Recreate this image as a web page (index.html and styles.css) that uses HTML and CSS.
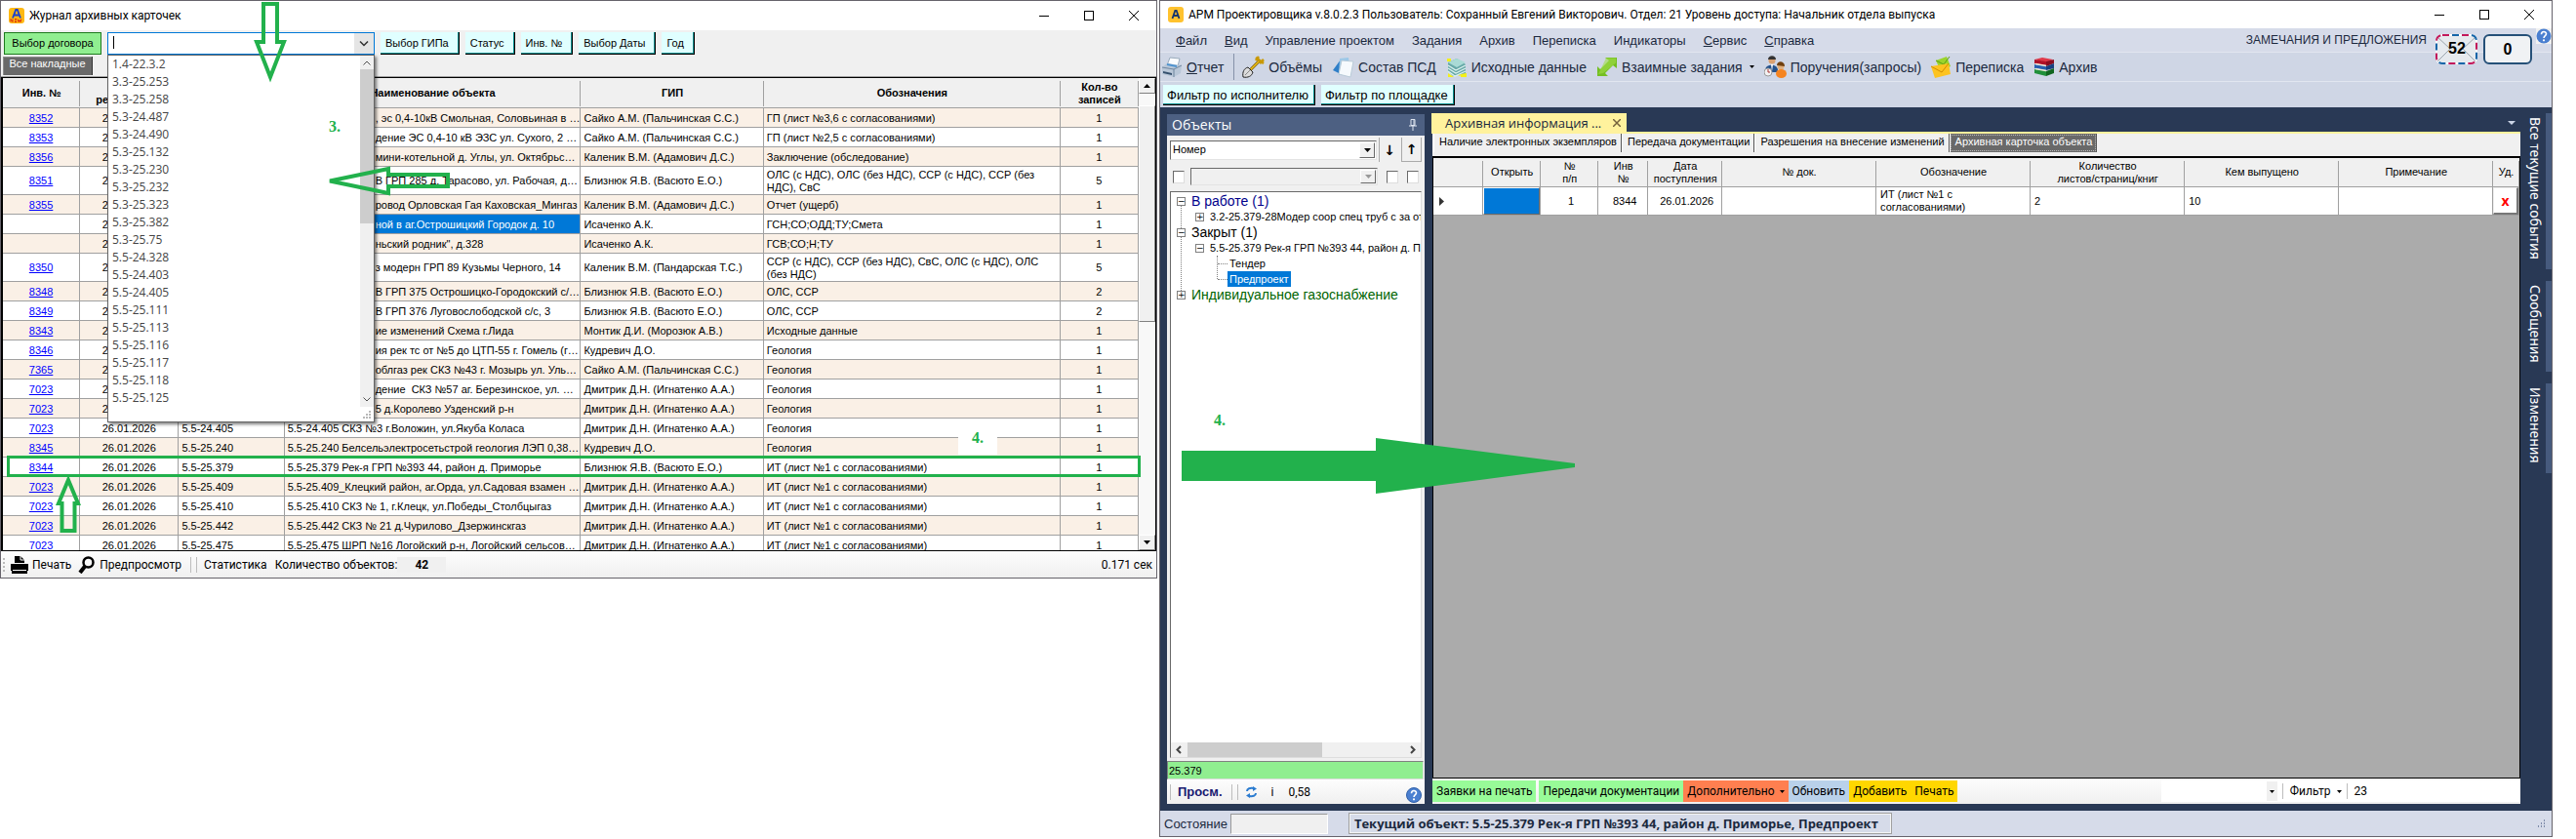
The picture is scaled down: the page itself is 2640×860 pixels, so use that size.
FILE: index.html
```html
<!DOCTYPE html>
<html lang="ru">
<head>
<meta charset="utf-8">
<title>Журнал архивных карточек</title>
<link rel="stylesheet" href="styles.css">
</head>
<body>
<main class="desk">

<section class="win journal">
  <header class="titlebar">
    <svg class="logo" viewBox="0 0 16 16" width="16" height="16"><rect width="16" height="16" rx="3" fill="#fdb813"/><path d="M4 10.500 7.200 2h1.600L12 10.500M5.300 7.500h5.400" fill="none" stroke="#1a3fd0" stroke-width="1.800"/><path d="M2 14.500v-3l2 3v-3M6 11.500h2M6 13h2M6 14.500h2M9 11.500l1 3 1-2 1 2 1-3" fill="none" stroke="#e03010" stroke-width="1"/></svg>
    <h1>Журнал архивных карточек</h1>
    <div class="winbtns">
      <button aria-label="Свернуть"><svg width="10" height="10"><path d="M0 5.500h10" stroke="#000"/></svg></button>
      <button aria-label="Развернуть"><svg width="10" height="10"><rect x=".5" y=".5" width="9" height="9" fill="none" stroke="#000"/></svg></button>
      <button aria-label="Закрыть"><svg width="10" height="10"><path d="M0 0l10 10M10 0L0 10" stroke="#000"/></svg></button>
    </div>
  </header>

  <div class="filters">
    <button class="pick">Выбор договора</button>
    <div class="combo">
      <input type="text" aria-label="Договор" class="combo-text"><button class="combo-arrow" aria-label="Открыть список"><svg width="10" height="6"><path d="M1 .5l4 4 4-4" fill="none" stroke="#333" stroke-width="1.500"/></svg></button>
      <i class="caret"></i>
      <div class="popup">
        <div class="popup-body">
          <ul>
            <li>1.4-22.3.2</li><li>3.3-25.253</li><li>3.3-25.258</li><li>5.3-24.487</li><li>5.3-24.490</li><li>5.3-25.132</li><li>5.3-25.230</li><li>5.3-25.232</li><li>5.3-25.323</li><li>5.3-25.382</li><li>5.3-25.75</li><li>5.5-24.328</li><li>5.5-24.403</li><li>5.5-24.405</li><li>5.5-25.111</li><li>5.5-25.113</li><li>5.5-25.116</li><li>5.5-25.117</li><li>5.5-25.118</li><li>5.5-25.125</li>
          </ul>
          <div class="thinbar"><svg width="8" height="5"><path d="M.5 4.500L4 1l3.500 3.500" fill="none" stroke="#505050"/></svg><i class="thinthumb"></i><svg width="8" height="5"><path d="M.5 .5L4 4 7.500 .5" fill="none" stroke="#505050"/></svg></div>
        </div>
        <svg class="popup-grip" width="8" height="8"><path d="M6 1h2M3 4h2M6 4h2M0 7h2M3 7h2M6 7h2" stroke="#b8b8b8" stroke-width="2"/></svg>
      </div>
    </div>
    <button class="aqua">Выбор ГИПа</button>
    <button class="aqua">Статус</button>
    <button class="aqua">Инв. №</button>
    <button class="aqua">Выбор Даты</button>
    <button class="aqua">Год</button>
  </div>
  <div class="tabline"><button class="darktab">Все накладные</button></div>

  <div class="gridwrap">
    <div class="gridview">
    <table class="log">
      <colgroup><col class="l1"><col class="l2"><col class="l3"><col class="l4"><col class="l5"><col class="l6"><col class="l7"></colgroup>
      <thead><tr><th>Инв. №</th><th>Дата регистрации</th><th>Договор</th><th>Наименование объекта</th><th>ГИП</th><th>Обозначения</th><th>Кол-во записей</th></tr></thead>
      <tbody>
        <tr><td><a href="#">8352</a></td><td>26.01.2026</td><td></td><td class="under">, эс 0,4-10кВ Смольная, Соловьиная в Минске</td><td>Сайко А.М. (Пальчинская С.С.)</td><td>ГП (лист №3,6 с согласованиями)</td><td>1</td></tr>
        <tr><td><a href="#">8353</a></td><td>26.01.2026</td><td></td><td class="under">дение ЭС 0,4-10 кВ ЭЗС ул. Сухого, 2 в Минске</td><td>Сайко А.М. (Пальчинская С.С.)</td><td>ГП (лист №2,5 с согласованиями)</td><td>1</td></tr>
        <tr><td><a href="#">8356</a></td><td>26.01.2026</td><td></td><td class="under">мини-котельной д. Углы, ул. Октябрьская, д. 1</td><td>Каленик В.М. (Адамович Д.С.)</td><td>Заключение (обследование)</td><td>1</td></tr>
        <tr class="tall"><td><a href="#">8351</a></td><td>26.01.2026</td><td></td><td class="under">В ГРП 285 д. Тарасово, ул. Рабочая, д. 12 взамен</td><td>Близнюк Я.В. (Васюто Е.О.)</td><td>ОЛС (с НДС), ОЛС (без НДС), ССР (с НДС), ССР (без НДС), СвС</td><td>5</td></tr>
        <tr><td><a href="#">8355</a></td><td>26.01.2026</td><td></td><td class="under">ровод Орловская Гая Каховская_Мингаз</td><td>Каленик В.М. (Адамович Д.С.)</td><td>Отчет (ущерб)</td><td>1</td></tr>
        <tr><td></td><td>26.01.2026</td><td></td><td class="under sel">ной в аг.Острошицкий Городок д. 10</td><td>Исаченко А.К.</td><td>ГСН;СО;ОДД;ТУ;Смета</td><td>1</td></tr>
        <tr><td></td><td>26.01.2026</td><td></td><td class="under">ньский родник", д.328</td><td>Исаченко А.К.</td><td>ГСВ;СО;Н;ТУ</td><td>1</td></tr>
        <tr class="tall"><td><a href="#">8350</a></td><td>26.01.2026</td><td></td><td class="under">з модерн ГРП 89 Кузьмы Черного, 14</td><td>Каленик В.М. (Пандарская Т.С.)</td><td>ССР (с НДС), ССР (без НДС), СвС, ОЛС (с НДС), ОЛС (без НДС)</td><td>5</td></tr>
        <tr><td><a href="#">8348</a></td><td>26.01.2026</td><td></td><td class="under">В ГРП 375 Острошицко-Городокский с/с, 14</td><td>Близнюк Я.В. (Васюто Е.О.)</td><td>ОЛС, ССР</td><td>2</td></tr>
        <tr><td><a href="#">8349</a></td><td>26.01.2026</td><td></td><td class="under">В ГРП 376 Луговослободской с/с, 3</td><td>Близнюк Я.В. (Васюто Е.О.)</td><td>ОЛС, ССР</td><td>2</td></tr>
        <tr><td><a href="#">8343</a></td><td>26.01.2026</td><td></td><td class="under">ие изменений Схема г.Лида</td><td>Монтик Д.И. (Морозюк А.В.)</td><td>Исходные данные</td><td>1</td></tr>
        <tr><td><a href="#">8346</a></td><td>26.01.2026</td><td></td><td class="under">ия рек тс от №5 до ЦТП-55 г. Гомель (геология)</td><td>Кудревич Д.О.</td><td>Геология</td><td>1</td></tr>
        <tr><td><a href="#">7365</a></td><td>26.01.2026</td><td></td><td class="under">облгаз рек СКЗ №43 г. Мозырь ул. Ульяновская</td><td>Сайко А.М. (Пальчинская С.С.)</td><td>Геология</td><td>1</td></tr>
        <tr><td><a href="#">7023</a></td><td>26.01.2026</td><td></td><td class="under">дение &nbsp;СКЗ №57 аг. Березинское, ул. Советская</td><td>Дмитрик Д.Н. (Игнатенко А.А.)</td><td>Геология</td><td>1</td></tr>
        <tr><td><a href="#">7023</a></td><td>26.01.2026</td><td></td><td class="under">5 д.Королево Узденский р-н</td><td>Дмитрик Д.Н. (Игнатенко А.А.)</td><td>Геология</td><td>1</td></tr>
        <tr><td><a href="#">7023</a></td><td>26.01.2026</td><td>5.5-24.405</td><td>5.5-24.405 СКЗ №3 г.Воложин, ул.Якуба Коласа</td><td>Дмитрик Д.Н. (Игнатенко А.А.)</td><td>Геология</td><td>1</td></tr>
        <tr><td><a href="#">8345</a></td><td>26.01.2026</td><td>5.5-25.240</td><td>5.5-25.240 Белсельэлектросетьстрой геология ЛЭП 0,38 кВ</td><td>Кудревич Д.О.</td><td>Геология</td><td>1</td></tr>
        <tr><td><a href="#">8344</a></td><td>26.01.2026</td><td>5.5-25.379</td><td>5.5-25.379 Рек-я ГРП №393 44, район д. Приморье</td><td>Близнюк Я.В. (Васюто Е.О.)</td><td>ИТ (лист №1 с согласованиями)</td><td>1</td></tr>
        <tr><td><a href="#">7023</a></td><td>26.01.2026</td><td>5.5-25.409</td><td>5.5-25.409_Клецкий район, аг.Орда, ул.Садовая взамен СКЗ</td><td>Дмитрик Д.Н. (Игнатенко А.А.)</td><td>ИТ (лист №1 с согласованиями)</td><td>1</td></tr>
        <tr><td><a href="#">7023</a></td><td>26.01.2026</td><td>5.5-25.410</td><td>5.5-25.410 СКЗ № 1, г.Клецк, ул.Победы_Столбцыгаз</td><td>Дмитрик Д.Н. (Игнатенко А.А.)</td><td>ИТ (лист №1 с согласованиями)</td><td>1</td></tr>
        <tr><td><a href="#">7023</a></td><td>26.01.2026</td><td>5.5-25.442</td><td>5.5-25.442 СКЗ № 21 д.Чурилово_Дзержинскгаз</td><td>Дмитрик Д.Н. (Игнатенко А.А.)</td><td>ИТ (лист №1 с согласованиями)</td><td>1</td></tr>
        <tr><td><a href="#">7023</a></td><td>26.01.2026</td><td>5.5-25.475</td><td>5.5-25.475 ШРП №16 Логойский р-н, Логойский сельсовет, д. 3</td><td>Дмитрик Д.Н. (Игнатенко А.А.)</td><td>ИТ (лист №1 с согласованиями)</td><td>1</td></tr>
      </tbody>
    </table>
    </div>
    <div class="fatbar">
      <button aria-label="Вверх"><svg width="7" height="4"><path d="M0 4l3.500-4L7 4z"/></svg></button>
      <i class="fatthumb"></i>
      <button class="down" aria-label="Вниз"><svg width="7" height="4"><path d="M0 0l3.500 4L7 0z"/></svg></button>
    </div>
  </div>

  <footer class="journal-foot">
    <i class="dots"></i>
    <button class="flat print"><svg width="20" height="18" viewBox="0 0 20 18"><path d="M5 7V0h6l4 4v3z" fill="#000"/><path d="M11 0v4h4" fill="none" stroke="#fff"/><path d="M1 8h18v7H1z"/><path d="M2 14.500h16V18H2z"/><path d="M3 14.500h14" stroke="#fff"/></svg>Печать</button>
    <button class="flat look"><svg width="18" height="18" viewBox="0 0 18 18"><circle cx="10.500" cy="6.500" r="5" fill="none" stroke="#000" stroke-width="2.500"/><path d="M7 10.500L2 17" stroke="#000" stroke-width="4"/></svg>Предпросмотр</button>
    <i class="sep"></i><i class="sep"></i>
    <button class="flat stat">Статистика</button>
    <span>Количество объектов:</span>
    <output class="total">42</output>
    <span class="time">0.171 сек</span>
  </footer>
</section>

<section class="win arm">
  <header class="titlebar">
    <svg class="logo" viewBox="0 0 16 16" width="16" height="16"><rect width="16" height="16" rx="3" fill="#ffc22e"/><path d="M4.500 12L7.300 4h1.400l2.800 8M5.700 9h4.600" fill="none" stroke="#14366e" stroke-width="1.800"/></svg>
    <h1>АРМ Проектировщика v.8.0.2.3 Пользователь: Сохранный Евгений Викторович. Отдел: 21 Уровень доступа: Начальник отдела выпуска</h1>
    <div class="winbtns">
      <button aria-label="Свернуть"><svg width="10" height="10"><path d="M0 5.500h10" stroke="#000"/></svg></button>
      <button aria-label="Развернуть"><svg width="10" height="10"><rect x=".5" y=".5" width="9" height="9" fill="none" stroke="#000"/></svg></button>
      <button aria-label="Закрыть"><svg width="10" height="10"><path d="M0 0l10 10M10 0L0 10" stroke="#000"/></svg></button>
    </div>
  </header>

  <nav class="menu">
    <button><u>Ф</u>айл</button><button><u>В</u>ид</button><button>Управление проектом</button><button>Задания</button><button>Архив</button><button>Переписка</button><button>Индикаторы</button><button><u>С</u>ервис</button><button><u>С</u>правка</button>
    <button class="remarks">ЗАМЕЧАНИЯ И ПРЕДЛОЖЕНИЯ</button>
    <div class="badges">
      <button class="mail"><svg viewBox="0 0 43 31" width="43" height="31"><rect x="1" y="1" width="41" height="29" rx="6" fill="#e6eaee" stroke="#fff" stroke-width="2"/><path d="M2 3l13 12L2 28M41 3L28 15l13 13" fill="none" stroke="#9aa4ac"/><rect x="1" y="1" width="41" height="29" rx="6" fill="none" stroke="#c2185b" stroke-width="2" stroke-dasharray="7 13"/><rect x="1" y="1" width="41" height="29" rx="6" fill="none" stroke="#1565a8" stroke-width="2" stroke-dasharray="7 13" stroke-dashoffset="-10"/></svg><b>52</b></button>
      <button class="zero"><b>0</b></button>
      <button class="help" aria-label="Справка"><svg width="16" height="16" viewBox="0 0 16 16"><circle cx="8" cy="8" r="7.500" fill="#4a7fd0"/><path d="M5.500 6.200c0-3.600 5-3.300 5-.4C10.500 7.700 8 7.500 8 10" fill="none" stroke="#fff" stroke-width="1.600"/><circle cx="8" cy="12.300" r="1.100" fill="#fff"/></svg></button>
    </div>
  </nav>

  <div class="tools">
    <button><svg width="22" height="22" viewBox="0 0 22 22"><path d="M6 9L9 1l10 1-2 8z" fill="#fafcff" stroke="#9ab"/><path d="M1 11l5-4 15 2-1 8-7 4L1 18z" fill="#b9c7d8"/><path d="M1 11l12 2 8-4M13 13v8" fill="none" stroke="#6f859e"/><path d="M2 15l9 2v2l-9-2z" fill="#35506e"/><path d="M6 8l10 2" stroke="#4f93cf" stroke-width="2"/></svg><span><u>О</u>тчет</span></button>
    <i class="vline"></i>
    <button><svg width="23" height="23" viewBox="0 0 23 23"><path d="M8 15L18 5" stroke="#7a5a00" stroke-width="3"/><path d="M8 15L18 5" stroke="#f5c518" stroke-width="1.500"/><path d="M14 2l8 6M17 1l-3 4M22 4l-4 4" stroke="#c99800" stroke-width="2.500"/><path d="M1 22c-1-5 1-9 5-10l5 5c-1 4-5 6-10 5z" fill="#dcdcdc" stroke="#222"/><path d="M3 20l5-5" stroke="#888"/></svg><span>Объёмы</span></button>
    <button><svg width="23" height="22" viewBox="0 0 23 22"><path d="M1 14L9 3v15z" fill="#2f7fc8"/><path d="M8 2l9-1 2 17-12 1z" fill="#9cc8e8"/><path d="M10 4l12 1-3 16-12-3z" fill="#f6fafd" stroke="#b9cbd8"/></svg><span>Состав ПСД</span></button>
    <button><svg width="22" height="22" viewBox="0 0 22 22"><path d="M1 2h4v3H1zM15 17h6v4h-6zM2 17l6 4H2z" fill="#f4f01a"/><path d="M2 14l9-4 9 4-6 6z" fill="#f4f01a"/><path d="M2 15l5 5 13-3V8L11 2 2 6z" fill="#68a9a8"/><path d="M2 6l9-4 9 4-9 5z" fill="#a9dad5"/><path d="M2 9l8 5 10-5M2 12l8 5 10-5M2 15l7 5 11-5" fill="none" stroke="#dff3f0" stroke-width="1.200"/></svg><span>Исходные данные</span></button>
    <button><svg width="22" height="22" viewBox="0 0 22 22"><path d="M9 1h12v11l-4-3-8 8 3 3H1V10l3 3 9-9z" fill="#74bf22"/><path d="M10 1.500h10v5L7 17l-5 1z" fill="#a2dd4a" opacity=".6"/></svg><span>Взаимные задания</span><svg class="drop" width="5" height="3"><path d="M0 0h5L2.500 3z"/></svg></button>
    <button><svg width="23" height="23" viewBox="0 0 23 23"><circle cx="8" cy="5" r="3.500" fill="#d9a070"/><path d="M4 4c0-5 8-5 8 0" fill="#333"/><path d="M1 15c0-7 13-7 13 0v2H1z" fill="#24528c"/><path d="M7 9h2l-1 7z" fill="#fff"/><circle cx="4" cy="17" r="4" fill="#f2f2f2" stroke="#999"/><path d="M4 14v3h2" fill="none" stroke="#a33"/><circle cx="17" cy="11" r="3.500" fill="#e0b080"/><path d="M13 10c0-5 8-5 8 1" fill="#70400f"/><ellipse cx="17.500" cy="18.500" rx="5.500" ry="4.500" fill="#f58420"/></svg><span>Поручения(запросы)</span></button>
    <button><svg width="21" height="23" viewBox="0 0 21 23"><path d="M5 5l11-4 4 10-10 5z" fill="#9bd42c"/><path d="M5 5l8 4 6-8" fill="none" stroke="#5d9c12"/><path d="M0 11l18-3 2 11-16 4z" fill="#fdc320"/><path d="M0 11l11 6 7-9" fill="none" stroke="#d08c00"/></svg><span>Переписка</span></button>
    <button><svg width="22" height="19" viewBox="0 0 22 19"><path d="M1 2l8-2 11 2-6 3z" fill="#e03848"/><path d="M1 2v4l12 2V4z" fill="#b01028"/><path d="M1 7v4l12 2V8z" fill="#2860b0"/><path d="M1 12v4l12 3v-6z" fill="#20903a"/><path d="M13 4l8-2v4l-8 3z" fill="#8a0c20"/><path d="M13 9l8-3v5l-8 2z" fill="#183f80"/><path d="M13 14l8-3v5l-8 3z" fill="#11661f"/><path d="M2 6.500l11 2M2 11.500l11 2" stroke="#f2ead8" stroke-width="1.500"/></svg><span>Архив</span></button>
  </div>

  <div class="armfilters"><button class="aqua">Фильтр по исполнителю</button><button class="aqua">Фильтр по площадке</button></div>

  <div class="work">
    <aside class="objects">
      <h2>Объекты<svg width="8" height="12"><path d="M2 .5h4v6H2zM0 7h8M4 7v5M5 1v6" fill="none" stroke="#dfe5f0"/></svg></h2>
      <div class="sortrow">
        <div class="pull"><select aria-label="Сортировка"><option>Номер</option></select><i><svg width="7" height="4"><path d="M0 0h7L3.500 4z"/></svg></i></div>
        <button class="sort">↓</button><button class="sort up">↑</button>
      </div>
      <div class="sortrow second">
        <input type="checkbox" aria-label="Включить фильтр">
        <div class="pull off"><select aria-label="Фильтр объектов" disabled><option></option></select><i><svg width="7" height="4"><path d="M0 0h7L3.500 4z" fill="#999"/></svg></i></div>
        <input type="checkbox" aria-label="Признак 1"><input type="checkbox" aria-label="Признак 2">
      </div>
      <div class="tree">
        <ul class="roots">
          <li><div class="node"><i class="box">−</i><span class="big blue">В работе (1)</span></div>
            <ul><li><div class="node"><i class="box">+</i><span>3.2-25.379-28Модер соор спец труб с за от</span></div></li></ul></li>
          <li><div class="node"><i class="box">−</i><span class="big">Закрыт (1)</span></div>
            <ul><li><div class="node"><i class="box">−</i><span>5.5-25.379 Рек-я ГРП №393 44, район д. Приморье</span></div>
              <ul class="leaves"><li><div class="node"><span>Тендер</span></div></li><li><div class="node"><span class="chosen">Предпроект</span></div></li></ul></li></ul></li>
          <li><div class="node"><i class="box">+</i><span class="big green">Индивидуальное газоснабжение</span></div></li>
        </ul>
        <div class="hbar"><svg width="6" height="9"><path d="M5 1L1.500 4.500 5 8" fill="none" stroke="#444" stroke-width="2"/></svg><i></i><svg width="6" height="9"><path d="M1 1l3.500 3.500L1 8" fill="none" stroke="#444" stroke-width="2"/></svg></div>
      </div>
      <input class="find" type="text" value="25.379" aria-label="Поиск">
      <div class="objfoot">
        <i class="sep"></i><button class="flat view">Просм.</button><i class="sep"></i><i class="sep"></i>
        <button class="flat" aria-label="Обновить"><svg width="11" height="12" viewBox="0 0 11 12"><path d="M1 5c0-3 3-3.500 7-3M10 7c0 3-3 3.500-7 3" fill="none" stroke="#2a7bd0" stroke-width="2"/><path d="M7 0l4 2.500L7 5zM4 7L0 9.500 4 12z" fill="#2a7bd0"/></svg></button>
        <span>i</span><span>0,58</span>
        <button class="flat q" aria-label="Помощь"><svg width="16" height="16" viewBox="0 0 16 16"><circle cx="8" cy="8" r="7.500" fill="#4a7fd0" stroke="#2f5fa8"/><path d="M5.500 6.200c0-3.600 5-3.300 5-.4C10.500 7.700 8 7.500 8 10" fill="none" stroke="#fff" stroke-width="1.600"/><circle cx="8" cy="12.300" r="1.100" fill="#fff"/></svg></button>
      </div>
    </aside>

    <article class="doc">
      <div class="doctabs"><div class="doctab">Архивная информация ...<button aria-label="Закрыть вкладку"><svg width="8" height="8"><path d="M0 0l8 8M8 0L0 8" stroke="#75633d" stroke-width="1.500"/></svg></button></div><svg class="more" width="8" height="4"><path d="M0 0h8L4 4z" fill="#ccd5e6"/></svg></div>
      <div class="subtabs"><button>Наличие электронных экземпляров</button><button>Передача документации</button><button>Разрешения на внесение изменений</button><button class="on">Архивная карточка объекта</button></div>
      <div class="sheet">
        <table class="cards">
          <colgroup><col class="r0"><col class="r1"><col class="r1"><col class="r3"><col class="r4"><col class="r5"><col class="r5"><col class="r5"><col class="r5"><col class="r5"><col class="r10"></colgroup>
          <thead><tr><th></th><th>Открыть</th><th>№<br>п/п</th><th>Инв<br>№</th><th>Дата поступления</th><th>№ док.</th><th>Обозначение</th><th>Количество<br>листов/страниц/книг</th><th>Кем выпущено</th><th>Примечание</th><th>Уд.</th></tr></thead>
          <tbody><tr><td><svg class="cur" width="5" height="9"><path d="M0 0l5 4.500L0 9z" fill="#333"/></svg></td><td class="fill"><button class="open" aria-label="Открыть"></button></td><td class="mid">1</td><td class="mid">8344</td><td class="mid">26.01.2026</td><td></td><td>ИТ (лист №1 с<br>согласованиями)</td><td>2</td><td>10</td><td></td><td class="fill"><button class="del">x</button></td></tr></tbody>
        </table>
      </div>
      <div class="docfoot">
        <button class="g">Заявки на печать</button><button class="g">Передачи документации</button><button class="o">Дополнительно<svg width="5" height="3"><path d="M0 0h5L2.500 3z"/></svg></button><button class="b">Обновить</button><button class="y">Добавить</button><button class="y">Печать</button>
        <div class="right"><div class="pull plain"><select aria-label="Значение фильтра"><option></option></select><i><svg width="5" height="3"><path d="M0 0h5L2.500 3z"/></svg></i></div><i class="sep"></i><button class="flat">Фильтр<svg width="5" height="3"><path d="M0 0h5L2.500 3z"/></svg></button><i class="sep"></i><span>23</span></div>
      </div>
    </article>

    <div class="side"><button>Все текущие события</button><button>Сообщения</button><button>Изменения</button></div>
  </div>

  <footer class="status"><label for="st">Состояние</label><input id="st" type="text"><strong>Текущий объект: 5.5-25.379 Рек-я ГРП №393 44, район д. Приморье, Предпроект</strong>
    <svg class="grip" width="8" height="8"><path d="M6 1h2M3 4h2M6 4h2M0 7h2M3 7h2M6 7h2" stroke="#7c8aa8" stroke-width="2" stroke-dasharray="1 1"/></svg></footer>
</section>

<svg class="marks" width="1640" height="600" viewBox="0 0 1640 600">
  <g fill="none" stroke="#22b14c" stroke-width="4">
    <path d="M270 4h14v39h7L277 79 263 43h7z"/>
    <path d="M338 185.500L398 173v6h61v12h-61v7z"/>
    <path d="M70 492l10 24h-3.500v28h-13v-28H60z"/>
    <rect x="8.500" y="468.500" width="1159" height="19" stroke-width="3"/>
  </g>
  <rect x="982" y="440" width="40" height="26" fill="#fff"/>
  <path d="M1211 462h199v-13l204 26v4l-204 27v-13h-199z" fill="#22b14c"/>
  <text x="337" y="135">3.</text><text x="996" y="454">4.</text><text x="1244" y="436">4.</text>
</svg>
</main>
</body>
</html>
```
FILE: styles.css
```css
* { box-sizing: border-box; }
body { margin: 0; background: #fff; font: 11px/13px "Liberation Sans", Arial, sans-serif; color: #000; }
button, input, select { font: inherit; color: inherit; margin: 0; padding: 0; border: 0; background: none; border-radius: 0; }
button { white-space: nowrap; }
ul { list-style: none; margin: 0; padding: 0; }
svg { flex: none; display: block; }
h1, h2 { margin: 0; font-weight: normal; }

.desk { position: relative; display: grid; grid-template-columns: 1186fr 1428fr; gap: 2px; align-items: start; padding-right: 24px; min-height: 100vh; }
.win { min-width: 0; border: 1px solid #66636b; display: flex; flex-direction: column; }
.titlebar { display: flex; align-items: center; background: #fff; height: 30px; padding-left: 8px; }
.titlebar h1 { font: 12px/16px Roboto, sans-serif; margin-left: 5px; white-space: nowrap; }
.winbtns { margin-left: auto; display: flex; }
.winbtns button { width: 46px; height: 28px; display: grid; place-items: center; }
.arm .titlebar { height: 28px; }
.journal { background: #f0f0f0; }

.filters { display: flex; align-items: flex-start; gap: 6px; padding: 2px 2px 0 3px; height: 25px; }
.pick { width: 100px; height: 23px; background: #90ee90; border: 1px solid #1e7a1e; }
.aqua { height: 23px; padding: 0 10px 0 5px; background: #e0ffff; border-right: 1px solid #000; border-bottom: 1px solid #000; box-shadow: inset -1px -1px #008b8b; }
.combo { position: relative; display: flex; width: 274px; height: 23px; border: 1px solid #0078d7; background: #fff; }
.combo-text { flex: 1; min-width: 0; padding-left: 6px; outline: 0; }
.combo-arrow { width: 20px; background: #e5e5e5; display: grid; place-items: center; }
.caret { position: absolute; left: 5px; top: 3px; width: 1px; height: 13px; background: #000; }
.popup { position: absolute; left: -1px; top: 22px; z-index: 2; width: 274px; padding-bottom: 15px; border: 1px solid #646464; background: #fff; box-shadow: 2px 2px 3px rgba(0,0,0,.5); }
.popup-body { display: flex; }
.popup ul { flex: 1; padding-left: 4px; font: 12px/18px "Open Sans", sans-serif; color: #444; }
.thinbar { width: 14px; background: #f0f0f0; display: flex; flex-direction: column; align-items: center; justify-content: space-between; padding: 5px 0; }
.thinthumb { width: 14px; height: 158px; margin: 4px 0 auto; background: #cdcdcd; }
.popup-grip { position: absolute; right: 3px; bottom: 3px; }
.tabline { height: 23px; padding: 2px 2px 0; border-bottom: 1px solid #a0a0a0; }
.darktab { height: 19px; width: 92px; background: #696969; color: #fff; border-right: 1px solid #333; box-shadow: inset 1px 1px #8c8c8c; padding-bottom: 4px; display: block; }

.gridwrap { display: flex; height: 486px; border: 1px solid #000; border-width: 1px 1px 1px 2px; overflow: hidden; }
.gridview { flex: 1; min-width: 0; overflow: hidden; }
table { border-collapse: separate; border-spacing: 0; table-layout: fixed; width: 100%; }
.log { background: #fff; }
.log .l1 { width: 6.800%; } .log .l2 { width: 8.700%; } .log .l3 { width: 9.300%; } .log .l4 { width: 26.100%; } .log .l5 { width: 16.100%; } .log .l6 { width: 26.100%; } .log .l7 { width: 6.900%; }
th { background: #f0f0f0 linear-gradient(#a0a0a0, #a0a0a0) right 3px / 1px 26px no-repeat; border-bottom: 1px solid #a0a0a0; padding: 0 4px; height: 30px; font-weight: normal; }
.log th { font-weight: bold; height: 31px; padding-top: 1px; }
td { border: solid #a0a0a0; border-width: 0 1px 1px 0; padding: 0 0 0 3px; height: 20px; }
.log td { white-space: nowrap; overflow: hidden; text-overflow: ellipsis; padding-top: 1px; }
.log .tall td { height: 29px; }
.log .tall td:nth-child(6) { white-space: normal; }
.log tbody tr:nth-child(odd) { background: #faf0e6; }
.log td:nth-child(1), .log td:nth-child(2), .log td:nth-child(7) { text-align: center; padding-left: 0; }
.log .under { padding-left: 93px; }
.log .sel { background: #0078d7; color: #fff; }
a { color: #00f; }
.fatbar { width: 17px; background: #f8f8f8; display: flex; flex-direction: column; }
.fatbar button, .fatthumb { border: 1px solid #fff; border-right-color: #808080; border-bottom-color: #808080; background: #f0f0f0; }
.fatbar button { height: 16px; display: grid; place-items: center; }
.fatthumb { height: 222px; margin-top: 12px; }
.fatbar .down { margin-top: auto; }

.journal-foot { height: 27px; display: flex; align-items: center; padding: 0 4px 0 2px; font: 12px/16px Roboto, sans-serif; background: linear-gradient(#fdfdfd, #f0f0f0); white-space: nowrap; }
.dots { width: 2px; height: 14px; background: repeating-linear-gradient(#bbb 0 2px, transparent 2px 4px); }
.flat { display: flex; align-items: center; gap: 3px; }
.print { margin-left: 5px; } .look { margin-left: 7px; gap: 4px; }
.sep { width: 1px; height: 16px; background: #bdbdbd; margin-left: 5px; }
.look + .sep { margin-left: 9px; }
.stat { margin: 0 8px 0 7px; }
.total { width: 50px; margin-left: 0; background: #f0f0f0; text-align: center; font-weight: bold; }
.time { margin-left: auto; }

.arm { min-height: calc(100vh - 2px); background: #cfd6e5; color: #1b293e; }
.arm .titlebar { color: #000; }
.menu { position: relative; display: flex; height: 25px; align-items: center; padding-left: 7px; background: #d6dbe9; border-bottom: 1px solid #e2e6f0; font-size: 13px; }
.menu > button { padding: 0 9px; }
.menu .remarks { margin-left: auto; margin-right: 119px; font-size: 12px; }
.badges { position: absolute; right: 0; top: 0; display: flex; align-items: flex-start; gap: 6px; }
.badges b { font: bold 16px/20px "Liberation Sans", Arial, sans-serif; color: #000; }
.mail, .zero { position: relative; margin-top: 6px; height: 31px; }
.mail b { position: absolute; left: 13px; top: 5px; }
.zero { width: 50px; background: #f0f2f4; border: 2px solid #255078; border-radius: 6px; }
.help { background: #f0f0f0; margin-left: -2px; }
.tools { display: flex; align-items: center; height: 30px; padding-left: 1px; gap: 10px; border-bottom: 1px solid #e2e6f0; }
.tools button { display: flex; align-items: center; gap: 4px; font-size: 14px; line-height: 18px; }
.tools .drop { margin-left: 3px; }
.vline { width: 1px; height: 27px; background: #8591a8; margin-right: -2px; }
.armfilters { display: flex; gap: 6px; height: 26px; padding: 3px 3px 0; }
.armfilters .aqua { height: 21px; padding: 0 6px 0 4px; font-size: 13px; color: #000; }

.work { flex: 1; display: grid; grid-template-columns: 264fr 1123fr 32px; background: #293955; padding: 6px 0 7px 7px; }
.objects { min-width: 0; display: flex; flex-direction: column; background: #f0f0f0; color: #000; margin-top: 1px; }
.objects h2 { display: flex; justify-content: space-between; align-items: center; height: 22px; padding: 0 8px 0 5px; background: #4d6082; color: #fff; font: 14px/20px "Open Sans", sans-serif; }
.sortrow { display: flex; align-items: center; padding: 2px 3px 0; height: 27px; gap: 2px; }
.pull { position: relative; flex: 1; height: 20px; background: #fff; border: 1px solid #808080; border-color: #696969 #e3e3e3 #e3e3e3 #696969; display: flex; }
.pull select { appearance: none; flex: 1; padding-left: 2px; opacity: 1; outline: 0; }
.pull i { position: absolute; right: 1px; top: 1px; bottom: 1px; width: 16px; background: #f0f0f0; border: 1px solid; border-color: #fff #696969 #696969 #fff; display: grid; place-items: center; pointer-events: none; }
.pull.off { background: #f0f0f0; height: 18px; }
.sort { width: 21px; height: 25px; border-left: 1px solid #aaa; font: bold 14px/20px "DejaVu Sans", sans-serif; }
.up { border: 1px solid #aaa; border-top: 0; }
.second { padding: 0 6px; gap: 9px; margin-top: 2px; height: 26px; margin-bottom: 2px; }
.second .pull { margin-left: -3px; }
input[type=checkbox] { appearance: none; width: 12px; height: 13px; background: #fff; border: 1px solid #696969; border-right-color: #ddd; border-bottom-color: #ddd; }
.tree { flex: 1; margin: 0 3px 3px; border: 1px solid #696969; border-right-color: #ddd; border-bottom-color: #ddd; background: #fff; display: flex; flex-direction: column; min-height: 300px; overflow: hidden; }
.node { position: relative; display: flex; align-items: center; height: 16px; white-space: nowrap; }
.node span { padding: 0 2px; line-height: 16px; }
.node .big { font-size: 14px; }
.blue { color: #00008b; } .green { color: #006400; }
.box { width: 9px; height: 9px; border: 1px solid #808080; background: #fff; font: 9px/7px "DejaVu Sans", sans-serif; text-align: center; flex: none; }
.box + span { margin-left: 4px; padding-left: 2px; }
.roots { position: relative; margin: 1px 0 auto 6px; }
.roots::before { content: ""; position: absolute; left: 4px; top: 8px; height: 96px; border-left: 1px dotted #808080; }
.roots ul { padding-left: 19px; }
.roots .leaves { padding-left: 19px; position: relative; }
.leaves::before { content: ""; position: absolute; left: 22px; top: 0; width: 1px; height: 24px; border-left: 1px dotted #808080; }
.leaves .node::before { content: ""; width: 10px; margin-left: 4px; border-top: 1px dotted #808080; }
.chosen { background: #0078d7; color: #fff; }
.hbar { display: flex; align-items: center; height: 15px; background: #f0f0f0; padding: 0 5px; justify-content: space-between; }
.hbar i { width: 56%; height: 15px; background: #cdcdcd; margin: 0 auto 0 6px; }
.find { height: 19px; margin-right: 1px; background: #90ee90; border: 1px solid #808080; border-right-color: #ddd; border-bottom-color: #ddd; padding-left: 1px; }
.objfoot { height: 25px; display: flex; align-items: center; font: 12px/16px Roboto, sans-serif; background: linear-gradient(#fdfdfd, #f0f0f0); }
.objfoot > .sep:first-child { margin-left: 3px; }
.view { margin: 0 4px 0 7px; font: bold 13px/16px "Liberation Sans", Arial, sans-serif; color: #191970; }
.objfoot .sep + .flat:not(.view) { margin: 0 0 0 8px; }
.objfoot span { margin-left: 15px; }
.q { margin: 7px 3px 0 auto; }

.doc { min-width: 0; display: flex; flex-direction: column; margin-left: 7px; color: #000; }
.doctabs { display: flex; justify-content: space-between; align-items: center; padding-right: 5px; border-bottom: 2px solid #fff29d; height: 21px; }
.doctab { display: flex; align-items: center; justify-content: space-between; width: 200px; height: 20px; padding: 0 6px 0 14px; background: #fff29d; color: #1b293e; font: 13px/18px "Open Sans", sans-serif; white-space: nowrap; }
.subtabs { display: flex; height: 23px; padding: 0 1px 4px; background: #f0f0f0; margin-left: 1px; }
.subtabs button { padding: 0 4px 3px 5px; border-right: 1px solid #555; border-left: 1px solid #fff; }
.subtabs .on { background: #696969; color: #fff; outline: 1px dotted #bbb; outline-offset: -2px; }
.sheet { flex: 1; background: #ababab; border: 1px solid #000; border-top-width: 2px; margin-left: 1px; }
.cards td { background: #fff; height: 29px; padding-left: 4px; }
.cards .r0 { width: 4.600%; } .cards .r1 { width: 5.300%; } .cards .r3 { width: 4.600%; } .cards .r4 { width: 6.800%; } .cards .r5 { width: 14.200%; } .cards .r10 { width: 2.400%; }
.cards th { padding: 0 2px; }
.cards .mid { text-align: center; }
.cards .fill { padding: 0; height: 29px; }
.fill button { display: block; width: 100%; height: 28px; }
.open { background: #0078d7; border: 1px solid #fff; border-right-color: #696969; border-bottom-color: #696969; }
.del { border: 1px solid #eee; border-right: 2px solid #777; border-bottom: 2px solid #777; color: #f00; font: bold 14px/20px "Open Sans", sans-serif; }
.cur { margin-left: 2px; }
.docfoot { display: flex; height: 26px; padding: 2px 0; background: linear-gradient(#fdfdfd, #f0f0f0); margin-left: 1px; font: 12px/16px Roboto, sans-serif; }
.docfoot > button { padding: 0 4px; display: flex; align-items: center; gap: 5px; height: 22px; }
.g { background: #98fb98; } .g + .g { margin-left: 3px; } .o { background: #ff7f50; } .b { background: #b9d1ea; } .y { background: #ffd700; }
.right { margin-left: auto; padding-right: 157px; display: flex; align-items: center; background: #fff; gap: 7px; }
.right .pull { width: 119px; flex: none; border: 0; }
.plain i { border: 0; width: 11px; right: 0; top: 0; bottom: 0; }
.right .sep { margin-left: -2px; }
.right .flat { gap: 6px; }
.side { display: flex; flex-direction: column; gap: 12px; margin-left: 3px; }
.side button { writing-mode: vertical-rl; width: 29px; padding: 4px 0 10px; text-align: left; color: #fff; border-right: 6px solid #465a7d; font: 14px/16px "Noto Sans", sans-serif; }
.status { display: flex; align-items: center; height: 26px; background: #d6dbe9; padding: 0 6px 0 4px; font-size: 13px; }
.status input { width: 100px; height: 21px; margin: 0 21px 0 3px; background: #f0f0f0; border: 1px solid #999; border-right-color: #fff; border-bottom-color: #fff; }
.status strong { padding: 2px 13px 2px 5px; border: 1px solid #a0a0a0; box-shadow: inset 0 0 0 1px #f4f4f4; font: bold 13px/16px "Open Sans", sans-serif; white-space: nowrap; }
.grip { margin-left: auto; }
.marks { position: absolute; left: 0; top: 0; z-index: 5; pointer-events: none; }
.marks text { font: bold 16px "Liberation Serif", serif; fill: #22b14c; }
```
